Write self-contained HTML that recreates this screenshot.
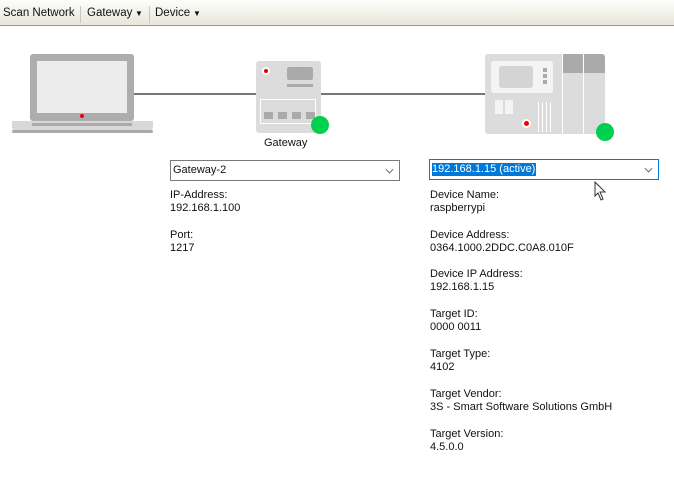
<!DOCTYPE html>
<html><head><style>
*{margin:0;padding:0;box-sizing:border-box}
body{width:674px;height:480px;background:#fff;font-family:"Liberation Sans",sans-serif;font-size:11px;color:#111;position:relative;overflow:hidden}
.tb{position:absolute;left:0;top:0;width:674px;height:26px;background:linear-gradient(#fdfdfb,#e8e6da);border-bottom:1px solid #9a988c}
.tb span{position:absolute;top:7px;font-size:11.5px}
.sep{position:absolute;top:6px;width:1px;height:17px;background:#c8c6bc}
.a{position:absolute}
.t{position:absolute;line-height:13px}
.dd{position:absolute;height:21px;border:1px solid #7a7a7a;background:#fff}
.chev{position:absolute;right:6px;top:5px;width:7px;height:7px;border-right:1px solid #555;border-bottom:1px solid #555;transform:rotate(45deg) scale(.8)}
</style></head><body>
<div class="tb">
<span style="left:3px">Scan Network</span>
<div class="sep" style="left:80px"></div>
<span style="left:87px">Gateway</span><span style="left:135px;font-size:8px;top:9px">▼</span>
<div class="sep" style="left:149px"></div>
<span style="left:155px">Device</span><span style="left:193px;font-size:8px;top:9px">▼</span>
</div>
<div class="a" style="left:133px;top:93px;width:123px;height:2px;background:#777"></div>
<div class="a" style="left:320px;top:93px;width:165px;height:2px;background:#777"></div>
<!-- laptop -->
<div class="a" style="left:30px;top:54px;width:104px;height:67px;background:#adadad;border-radius:3px"></div>
<div class="a" style="left:37px;top:61px;width:90px;height:52px;background:#ececec"></div>
<div class="a" style="left:80px;top:114px;width:4px;height:4px;background:#e00;border-radius:50%"></div>
<div class="a" style="left:12px;top:121px;width:141px;height:10px;background:#d8d8d8;border-radius:0 0 4px 4px"></div>
<div class="a" style="left:32px;top:123px;width:100px;height:3px;background:#aaa"></div>
<div class="a" style="left:12px;top:130px;width:141px;height:3px;background:#aaa;border-radius:2px"></div>
<!-- gateway -->
<div class="a" style="left:256px;top:61px;width:65px;height:72px;background:#dcdcdc;border-radius:3px"></div>
<div class="a" style="left:262px;top:67px;width:8px;height:8px;background:#e00;border-radius:50%;border:2px solid #fff"></div>
<div class="a" style="left:287px;top:67px;width:26px;height:13px;background:#aaa;border-radius:2px"></div>
<div class="a" style="left:287px;top:84px;width:26px;height:3px;background:#aaa"></div>
<div class="a" style="left:260px;top:99px;width:56px;height:25px;border:1px solid #fff"></div>
<div class="a" style="left:264px;top:112px;width:9px;height:7px;background:#aaa;box-shadow:14px 0 #aaa,28px 0 #aaa,42px 0 #aaa"></div>
<div class="a" style="left:311px;top:116px;width:18px;height:18px;background:#00d050;border-radius:50%"></div>
<div class="t" style="left:264px;top:137px">Gateway</div>
<!-- device -->
<div class="a" style="left:485px;top:54px;width:120px;height:80px;background:#dcdcdc;border-radius:3px"></div>
<div class="a" style="left:491px;top:61px;width:62px;height:32px;background:#f4f4f4;border-radius:3px"></div>
<div class="a" style="left:499px;top:66px;width:34px;height:22px;background:#d4d4d4;border-radius:3px"></div>
<div class="a" style="left:543px;top:68px;width:4px;height:4px;background:#aaa;box-shadow:0 6px #aaa,0 12px #aaa"></div>
<div class="a" style="left:562px;top:54px;width:1px;height:80px;background:#fff"></div>
<div class="a" style="left:583px;top:54px;width:1px;height:80px;background:#fff"></div>
<div class="a" style="left:563px;top:54px;width:20px;height:19px;background:#aaa"></div>
<div class="a" style="left:584px;top:54px;width:21px;height:19px;background:#aaa;border-radius:0 3px 0 0"></div>
<div class="a" style="left:495px;top:100px;width:8px;height:14px;background:#f4f4f4;box-shadow:10px 0 #f4f4f4"></div>
<div class="a" style="left:522px;top:119px;width:9px;height:9px;background:#e00;border-radius:50%;border:2px solid #fff"></div>
<div class="a" style="left:538px;top:102px;width:1px;height:30px;background:#fff;box-shadow:4px 0 #fff,8px 0 #fff,12px 0 #fff"></div>
<div class="a" style="left:596px;top:123px;width:18px;height:18px;background:#00d050;border-radius:50%"></div>
<!-- dropdowns -->
<div class="dd" style="left:170px;top:160px;width:230px"><span class="t" style="left:2px;top:3px">Gateway-2</span><div class="chev"></div></div>
<div class="dd" style="left:429px;top:159px;width:230px;border-color:#0078d7"><span class="t" style="left:2px;top:3px;background:#0078d7;color:#fff;padding-right:1px">192.168.1.15 (active)</span><div class="chev"></div></div>
<svg class="a" style="left:594px;top:181px" width="14" height="20"><path d="M1 1 L1 15 L4 12 L7 19 L9 18 L6 11 L11 11 Z" fill="#fff" stroke="#333" stroke-width="1"/></svg>
<div class="t" style="left:170px;top:189px">IP-Address:<br>192.168.1.100</div>
<div class="t" style="left:170px;top:229px">Port:<br>1217</div>
<div class="t" style="left:430px;top:189px">Device Name:<br>raspberrypi</div>
<div class="t" style="left:430px;top:229px">Device Address:<br>0364.1000.2DDC.C0A8.010F</div>
<div class="t" style="left:430px;top:268px">Device IP Address:<br>192.168.1.15</div>
<div class="t" style="left:430px;top:308px">Target ID:<br>0000 0011</div>
<div class="t" style="left:430px;top:348px">Target Type:<br>4102</div>
<div class="t" style="left:430px;top:388px">Target Vendor:<br>3S - Smart Software Solutions GmbH</div>
<div class="t" style="left:430px;top:428px">Target Version:<br>4.5.0.0</div>
</body></html>
